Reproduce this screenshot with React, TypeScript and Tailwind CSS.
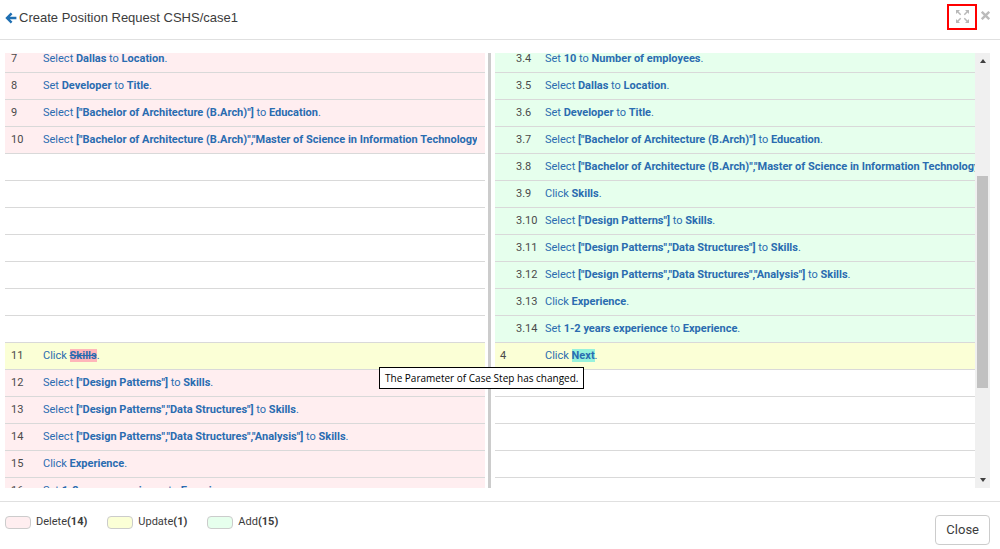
import { useLayoutEffect, useRef } from "react";
import type { ReactNode } from "react";

type Kind = "delete" | "add" | "update" | "empty";
type Row = { no?: string; nested?: boolean; kind: Kind; text?: ReactNode };

const ARCH = '["Bachelor of Architecture (B.Arch)"]';
const ARCH_MASTER =
  '["Bachelor of Architecture (B.Arch)","Master of Science in Information Technology (MSIT)"]';
const DP = '["Design Patterns"]';
const DP_DS = '["Design Patterns","Data Structures"]';
const DP_DS_AN = '["Design Patterns","Data Structures","Analysis"]';

const assign = (verb: string, value: string, field: string) => (
  <>
    {verb} <b>{value}</b> to <b>{field}</b>.
  </>
);
const click = (target: string) => (
  <>
    Click <b>{target}</b>.
  </>
);

const empty: Row = { kind: "empty" };

const before: Row[] = [
  { no: "7", kind: "delete", text: assign("Select", "Dallas", "Location") },
  { no: "8", kind: "delete", text: assign("Set", "Developer", "Title") },
  { no: "9", kind: "delete", text: assign("Select", ARCH, "Education") },
  { no: "10", kind: "delete", text: assign("Select", ARCH_MASTER, "Education") },
  empty,
  empty,
  empty,
  empty,
  empty,
  empty,
  empty,
  {
    no: "11",
    kind: "update",
    text: (
      <>
        Click <del className="bg-[#ffb6ba] font-bold">Skills</del>.
      </>
    ),
  },
  { no: "12", kind: "delete", text: assign("Select", DP, "Skills") },
  { no: "13", kind: "delete", text: assign("Select", DP_DS, "Skills") },
  { no: "14", kind: "delete", text: assign("Select", DP_DS_AN, "Skills") },
  { no: "15", kind: "delete", text: click("Experience") },
  { no: "16", kind: "delete", text: assign("Set", "1-2 years experience", "Experience") },
];

const after: Row[] = [
  { no: "3.4", nested: true, kind: "add", text: assign("Set", "10", "Number of employees") },
  { no: "3.5", nested: true, kind: "add", text: assign("Select", "Dallas", "Location") },
  { no: "3.6", nested: true, kind: "add", text: assign("Set", "Developer", "Title") },
  { no: "3.7", nested: true, kind: "add", text: assign("Select", ARCH, "Education") },
  { no: "3.8", nested: true, kind: "add", text: assign("Select", ARCH_MASTER, "Education") },
  { no: "3.9", nested: true, kind: "add", text: click("Skills") },
  { no: "3.10", nested: true, kind: "add", text: assign("Select", DP, "Skills") },
  { no: "3.11", nested: true, kind: "add", text: assign("Select", DP_DS, "Skills") },
  { no: "3.12", nested: true, kind: "add", text: assign("Select", DP_DS_AN, "Skills") },
  { no: "3.13", nested: true, kind: "add", text: click("Experience") },
  { no: "3.14", nested: true, kind: "add", text: assign("Set", "1-2 years experience", "Experience") },
  {
    no: "4",
    kind: "update",
    text: (
      <>
        Click <ins className="bg-[#97f2dc] font-bold no-underline">Next</ins>.
      </>
    ),
  },
  empty,
  empty,
  empty,
  empty,
  empty,
];

const rowColor: Record<Kind, string> = {
  delete: "bg-[#ffeef0]",
  add: "bg-[#e6ffed]",
  update: "bg-[#fbffd6]",
  empty: "bg-white",
};

function StepTable({ rows, label, wide }: { rows: Row[]; label: string; wide?: boolean }) {
  return (
    <div className="min-w-0 flex-1">
      <table
        aria-label={label}
        className="w-full table-fixed border-separate border-spacing-0 font-['Roboto',sans-serif] text-[11px] leading-4"
      >
        <colgroup>
          <col className={wide ? "w-[50px]" : "w-[38px]"} />
          <col />
        </colgroup>
        <tbody>
          {rows.map((row, i) => (
            <tr key={i} className={`h-[27px] ${rowColor[row.kind]}`}>
              <td
                className={`border-b border-[#d9d9d9] p-0 pb-px text-[#4a4a4a] ${row.nested ? "pl-[21px]" : wide ? "pl-[5px]" : "pl-1.5"}`}
              >
                {row.no}
              </td>
              <td className={`border-b border-[#d9d9d9] p-0 pb-px ${wide ? "" : "pr-2"}`}>
                {row.text && (
                  <a href="#step" className="block overflow-hidden whitespace-nowrap text-[#2a6cb0]">
                    {row.text}
                  </a>
                )}
              </td>
            </tr>
          ))}
        </tbody>
      </table>
    </div>
  );
}

function Legend({ color, name, count }: { color: string; name: string; count: number }) {
  return (
    <li className="flex items-center gap-[5px]">
      <span className={`h-[13px] w-[26px] rounded border border-[#ccc] ${color}`} />
      <span className="whitespace-nowrap">
        {name}
        <b>({count})</b>
      </span>
    </li>
  );
}

export default function App() {
  const scroller = useRef<HTMLDivElement>(null);

  useLayoutEffect(() => {
    if (scroller.current) scroller.current.scrollTop = 7;
  }, []);

  return (
    <div className="flex h-screen flex-col bg-white font-['Liberation_Sans',Arial,sans-serif] text-[#3c3c3c]">
      <header className="flex h-10 shrink-0 items-center border-b border-[#e0e0e0] pr-2.5 pb-1 pl-[5px]">
        <a href="#back" aria-label="Back" className="pr-0.5">
          <svg viewBox="0 0 12 12" className="size-3" fill="none" stroke="#1f6fb2" strokeWidth="2.4">
            <path d="M6.6 1.3 2 6l4.6 4.7M2 6h9.4" />
          </svg>
        </a>
        <h1 className="flex-1 text-[13px]">Create Position Request CSHS/case1</h1>
        <div className="flex items-center gap-1 pb-0.5">
          <button
            aria-label="Full screen"
            className="flex h-[26px] w-[30px] items-center justify-center border-2 border-[#f00]"
          >
            <svg viewBox="0 0 13 13" className="size-[13px]" fill="#b8b8b8" stroke="#b8b8b8">
              <path stroke="none" d="M0 0h4L0 4zM13 0v4L9 0zM0 13V9L4 13zM13 13H9L13 9z" />
              <path strokeWidth="1.5" d="M1.5 1.5l3.2 3.2M11.5 1.5 8.3 4.7M1.5 11.5l3.2-3.2M11.5 11.5 8.3 8.3" />
            </svg>
          </button>
          <button aria-label="Close dialog" className="pb-0.5">
            <svg viewBox="0 0 9 9" className="size-[9px]" stroke="#bbb" strokeWidth="2.4">
              <path d="M.8.8l7.4 7.4M8.2.8.8 8.2" />
            </svg>
          </button>
        </div>
      </header>

      <main className="relative flex min-h-0 flex-1 pt-[13px] pr-2.5 pb-[13px] pl-[5px]">
        <div ref={scroller} className="min-w-0 flex-1 overflow-hidden">
          <div className="flex">
            <StepTable rows={before} label="Steps before" />
            <div className="mr-1 ml-[3px] w-[3px] shrink-0 bg-[#ccc]" />
            <StepTable rows={after} label="Steps after" wide />
          </div>
        </div>
        <div aria-hidden="true" className="flex w-[15px] flex-col items-center bg-[#f0f0f0] py-1.5">
          <svg viewBox="0 0 6 4" className="h-1 w-1.5 shrink-0" fill="#404040">
            <path d="M0 4 3 0l3 4z" />
          </svg>
          <div className="flex w-[11px] flex-1 flex-col">
            <div className="grow-[113]" />
            <div className="grow-[212] bg-[#c1c1c1]" />
            <div className="grow-[90]" />
          </div>
          <svg viewBox="0 0 6 4" className="h-1 w-1.5 shrink-0" fill="#404040">
            <path d="M0 0l3 4 3-4z" />
          </svg>
        </div>
        <div
          role="tooltip"
          className="absolute top-[327px] left-[379px] border border-black bg-white px-[5px] py-0.5 font-['Open_Sans',sans-serif] text-[10px] leading-4 whitespace-nowrap text-black"
        >
          The Parameter of Case Step has changed.
        </div>
      </main>

      <footer className="flex h-12 shrink-0 items-start justify-between border-t border-[#e0e0e0] pr-2.5 pl-[5px] font-['Roboto',sans-serif]">
        <ul className="flex gap-5 pt-3 text-[11px] leading-4">
          <Legend color="bg-[#ffeef0]" name="Delete" count={14} />
          <Legend color="bg-[#fbffd6]" name="Update" count={1} />
          <Legend color="bg-[#e6ffed]" name="Add" count={15} />
        </ul>
        <button className="mt-[13px] h-[30px] rounded border border-[#ccc] px-2.5 text-[13px]">Close</button>
      </footer>
    </div>
  );
}
